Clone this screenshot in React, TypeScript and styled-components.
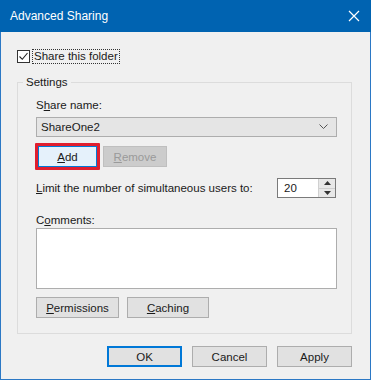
import React from "react";
import styled, { createGlobalStyle } from "styled-components";

const GlobalStyle = createGlobalStyle`
  html, body {
    margin: 0;
    padding: 0;
    background: #f0f0f0;
  }
  body {
    font-family: "Liberation Sans", Arial, sans-serif;
    font-size: 11.5px;
    color: #1a1a1a;
  }
`;

const Window = styled.div`
  width: 371px;
  height: 380px;
  box-sizing: border-box;
  display: flex;
  flex-direction: column;
  background: #f0f0f0;
  border: 1px solid #2b78c5;
  border-top: none;
`;

const TitleBar = styled.div`
  height: 32px;
  flex-shrink: 0;
  margin: 0 -1px;
  background: #0063b1;
  color: #fff;
  display: flex;
  align-items: center;
  justify-content: space-between;
  padding: 0 10px 0 10px;
  font-size: 12px;
`;

const CloseGlyph = styled.svg`
  width: 12px;
  height: 12px;
  margin-right: 1px;
`;

const Body = styled.div`
  flex: 1;
  display: flex;
  flex-direction: column;
  padding: 17px 18px 0 16px;
  white-space: nowrap;
`;

const CheckRow = styled.label`
  display: flex;
  align-items: center;
  height: 14px;
  gap: 3px;
`;

const CheckBox = styled.span`
  width: 11px;
  height: 11px;
  border: 1px solid #333;
  background: #fff;
  display: flex;
  align-items: center;
  justify-content: center;
`;

const FocusText = styled.span`
  outline: 1px dotted #333;
  line-height: 13px;
  padding: 0 1px;
`;

const Group = styled.fieldset`
  margin: 11px 0 0 0;
  border: 1px solid #dcdcdc;
  padding: 7px 14px 15px 18px;
  display: flex;
  flex-direction: column;
  min-width: 0;
`;

const Legend = styled.legend`
  padding: 0 3px;
  margin-left: -13px;
  line-height: 16px;
`;

const Label = styled.div<{ $top?: number }>`
  line-height: 16px;
  margin-top: ${(p) => p.$top ?? 0}px;
`;

const Key = styled.span`
  text-decoration: underline;
`;

const Select = styled.div`
  margin-top: 4px;
  height: 20px;
  box-sizing: border-box;
  border: 1px solid #adadad;
  background: #e5e5e5;
  display: flex;
  align-items: center;
  justify-content: space-between;
  padding: 0 8px 0 4px;
`;

const ButtonRow = styled.div<{ $top: number; $gap: number }>`
  display: flex;
  align-items: center;
  gap: ${(p) => p.$gap}px;
  margin-top: ${(p) => p.$top}px;
`;

const Highlight = styled.div`
  border: 3px solid #e01e2e;
  border-radius: 1px;
  margin-left: -1px;
  display: flex;
`;

const Button = styled.button<{ $w: number; $variant?: "focus" | "disabled" | "default" }>`
  width: ${(p) => p.$w}px;
  height: 21px;
  box-sizing: border-box;
  font-family: inherit;
  font-size: 11.5px;
  padding: 0;
  border: 1px solid
    ${(p) =>
      p.$variant === "focus" || p.$variant === "default"
        ? "#0078d7"
        : p.$variant === "disabled"
        ? "#bfbfbf"
        : "#adadad"};
  background: ${(p) =>
    p.$variant === "focus" ? "#e5f1fb" : p.$variant === "disabled" ? "#cccccc" : "#e1e1e1"};
  color: ${(p) => (p.$variant === "disabled" ? "#9a9a9a" : "#1a1a1a")};
  box-shadow: ${(p) => (p.$variant === "default" ? "inset 0 0 0 1px #0078d7" : "none")};
`;

const LimitRow = styled.div`
  margin-top: 8px;
  display: flex;
  align-items: center;
  justify-content: space-between;
  height: 20px;
`;

const Spin = styled.div`
  width: 59px;
  height: 20px;
  box-sizing: border-box;
  border: 1px solid #7a7a7a;
  background: #fff;
  display: flex;
  margin-right: 1px;
`;

const SpinValue = styled.div`
  flex: 1;
  padding-left: 6px;
  line-height: 18px;
`;

const SpinButtons = styled.div`
  width: 16px;
  display: flex;
  flex-direction: column;
  border-left: 1px solid #d0d0d0;
`;

const SpinArrow = styled.div`
  flex: 1;
  background: #e8e8e8;
  display: flex;
  align-items: center;
  justify-content: center;
  & + & {
    border-top: 1px solid #cfcfcf;
  }
`;

const TextArea = styled.div`
  height: 61px;
  box-sizing: border-box;
  border: 1px solid #adadad;
  background: #fff;
`;

const Footer = styled.div`
  display: flex;
  justify-content: flex-end;
  gap: 10px;
  margin-top: 12px;
`;

export default function App() {
  return (
    <>
      <GlobalStyle />
      <Window>
        <TitleBar>
          <span>Advanced Sharing</span>
          <CloseGlyph viewBox="0 0 12 12">
            <path d="M1 1 L11 11 M11 1 L1 11" stroke="#fff" strokeWidth="1.2" fill="none" />
          </CloseGlyph>
        </TitleBar>
        <Body>
          <CheckRow>
            <CheckBox>
              <svg width="9" height="9" viewBox="0 0 9 9">
                <path d="M0.5 4.5 L3.3 7.3 L8.5 1" stroke="#222" strokeWidth="1.1" fill="none" />
              </svg>
            </CheckBox>
            <FocusText>Share this folder</FocusText>
          </CheckRow>
          <Group>
            <Legend>Settings</Legend>
            <Label>
              S<Key>h</Key>are name:
            </Label>
            <Select>
              <span>ShareOne2</span>
              <svg width="9" height="6" viewBox="0 0 9 6">
                <path d="M0.5 0.5 L4.5 4.5 L8.5 0.5" stroke="#555" strokeWidth="1" fill="none" />
              </svg>
            </Select>
            <ButtonRow $top={6} $gap={3}>
              <Highlight>
                <Button $w={59} $variant="focus">
                  <Key>A</Key>dd
                </Button>
              </Highlight>
              <Button $w={64} $variant="disabled">
                <Key>R</Key>emove
              </Button>
            </ButtonRow>
            <LimitRow>
              <span>
                <Key>L</Key>imit the number of simultaneous users to:
              </span>
              <Spin>
                <SpinValue>20</SpinValue>
                <SpinButtons>
                  <SpinArrow>
                    <svg width="7" height="4" viewBox="0 0 7 4">
                      <path d="M0 4 L3.5 0 L7 4 Z" fill="#333" />
                    </svg>
                  </SpinArrow>
                  <SpinArrow>
                    <svg width="7" height="4" viewBox="0 0 7 4">
                      <path d="M0 0 L3.5 4 L7 0 Z" fill="#333" />
                    </svg>
                  </SpinArrow>
                </SpinButtons>
              </Spin>
            </LimitRow>
            <Label $top={14}>
              C<Key>o</Key>mments:
            </Label>
            <TextArea />
            <ButtonRow $top={8} $gap={8}>
              <Button $w={83}>
                <Key>P</Key>ermissions
              </Button>
              <Button $w={82}>
                <Key>C</Key>aching
              </Button>
            </ButtonRow>
          </Group>
          <Footer>
            <Button $w={75} $variant="default">OK</Button>
            <Button $w={75}>Cancel</Button>
            <Button $w={75}>Apply</Button>
          </Footer>
        </Body>
      </Window>
    </>
  );
}
